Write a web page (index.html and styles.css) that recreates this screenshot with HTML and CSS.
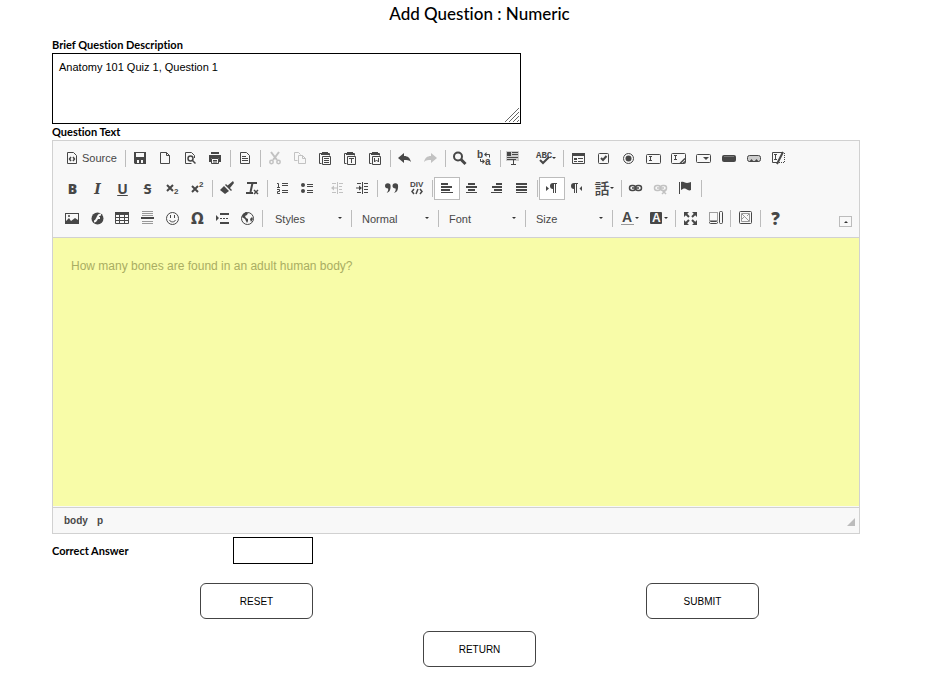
FILE: index.html
```
<!DOCTYPE html>
<html lang="en">
<head>
<meta charset="UTF-8" />
<meta name="viewport" content="width=device-width, initial-scale=1" />
<title>Add Question : Numeric</title>
<link rel="stylesheet" href="styles.css">
</head>
<body>

<form class="question-form">
  <h1>Add Question : Numeric</h1>

  <label class="field-label" for="description">Brief Question Description</label>
  <div class="description-box">
    <textarea id="description" class="description">Anatomy 101 Quiz 1, Question 1</textarea>
    <svg class="grip" viewBox="0 0 16 16"><path d="M1 15L15 1M5 15L15 5M9 15L15 9M13 15L15 13"/></svg>
  </div>

  <label class="field-label" for="questionText">Question Text</label>
  <div class="editor">
    <div class="toolbar">

      <div class="row">
        <button type="button" class="tool source"><svg viewBox="0 0 16 16"><path class="line" d="M3.5 2.5h6l3 3v8h-9z"/><path class="thick" d="M7 7L5.500 9L7 11M9 7l1.500 2L9 11"/></svg>Source</button>
        <span class="sep"></span>
        <button type="button" class="tool" aria-label="Save"><svg viewBox="0 0 16 16"><path fill-rule="evenodd" d="M2 2h12v12H3L2 13zM4 3v4h8V3zM5 10v3h2v-3zM9 10v3h2v-3z"/></svg></button>
        <button type="button" class="tool" aria-label="New Page"><svg viewBox="0 0 16 16"><path class="line" d="M3.500 2.500h6l3 3v8h-9zM9.500 2.500v3h3"/></svg></button>
        <button type="button" class="tool" aria-label="Preview"><svg viewBox="0 0 16 16"><path class="line" d="M12.500 8V5.500l-3-3h-6v11h6"/><circle class="thick" cx="8.500" cy="8.500" r="2.500"/><path class="thick" d="M10.500 10.500l3 3"/></svg></button>
        <button type="button" class="tool" aria-label="Print"><svg viewBox="0 0 16 16"><path d="M4 2h8v2H4zM2 5h12v7h-2V8H4v4H2z"/><path class="line" d="M4.500 8.500h7v5h-7zM6 10.500h4M6 12h4"/></svg></button>
        <span class="sep"></span>
        <button type="button" class="tool" aria-label="Templates"><svg viewBox="0 0 16 16"><path class="line" d="M3.500 2.500h6l3 3v8h-9zM5 6.500h4M5 8.500h6M5 10.500h6"/></svg></button>
        <span class="sep"></span>
        <button type="button" class="tool" aria-label="Cut" disabled><svg viewBox="0 0 16 16"><path class="bold-line" d="M4 2l6 8M12 2L6 10"/><circle class="thick" cx="4.500" cy="12" r="1.700"/><circle class="thick" cx="11.500" cy="12" r="1.700"/></svg></button>
        <button type="button" class="tool" aria-label="Copy" disabled><svg viewBox="0 0 16 16"><path class="line" d="M5.500 10.500h-3v-8h4l2 2M6.500 5.500h4l3 3v5h-7zM10.500 5.500v3h3"/></svg></button>
        <button type="button" class="tool" aria-label="Paste"><svg viewBox="0 0 16 16"><path class="line" d="M4.500 13.500h-2v-10h2M11 3.500h1.500v2"/><path d="M4 3h1V2h6v1h1v2H4z"/><path class="line" d="M5.500 6.500h8v8h-8zM7 8.500h5M7 10.500h5M7 12.500h5"/></svg></button>
        <button type="button" class="tool" aria-label="Paste as plain text"><svg viewBox="0 0 16 16"><path class="line" d="M4.500 13.500h-2v-10h2M11 3.500h1.500v2"/><path d="M4 3h1V2h6v1h1v2H4z"/><path class="line" d="M5.500 6.500h8v8h-8zM7 8.500h5M9.500 9v4"/></svg></button>
        <button type="button" class="tool" aria-label="Paste from Word"><svg viewBox="0 0 16 16"><path class="line" d="M4.500 13.500h-2v-10h2M11 3.500h1.500v2"/><path d="M4 3h1V2h6v1h1v2H4z"/><path class="line" d="M5.500 6.500h8v8h-8zM7.500 8v4l2-2 2 2V8"/></svg></button>
        <span class="sep"></span>
        <button type="button" class="tool" aria-label="Undo"><svg viewBox="0 0 16 16"><path d="M1 8l6-5v3c4 0 6 2 7 6-2-2-4-2-7-2v3z"/></svg></button>
        <button type="button" class="tool" aria-label="Redo" disabled><svg viewBox="0 0 16 16"><path d="M15 8L9 3v3c-4 0-6 2-7 6 2-2 4-2 7-2v3z"/></svg></button>
        <span class="sep"></span>
        <button type="button" class="tool" aria-label="Find"><svg viewBox="0 0 16 16"><circle class="bold-line" cx="6" cy="6.500" r="4"/><path class="heavy" d="M9 9.500l4.500 4.500"/></svg></button>
        <button type="button" class="tool" aria-label="Replace"><svg viewBox="0 0 16 16"><text class="mini" x="0" y="8">b</text><text class="mini" x="8" y="15">a</text><path class="line" d="M9 4.500h3.500v3M3.500 9v2.500H6"/><path d="M7 4.500L9.500 2v5zM8 11.500L5.500 9v5z"/></svg></button>
        <span class="sep"></span>
        <button type="button" class="tool select-all" aria-label="Select All"><svg viewBox="0 0 16 16"><path class="haze" d="M1 1h13v10H1z"/><path d="M2 2h4v4H2z"/><path class="line" d="M7 2.500h6M7 4.500h6M2 7.500h11M2 9.500h9M8.500 10v5M6 14.500h5"/></svg></button>
        <button type="button" class="tool spell" aria-label="Spell Check"><svg viewBox="0 0 16 16"><text class="abc" x="0" y="8">ABC</text><path class="bold-line" d="M4 10l3 3L13 7"/></svg><svg class="caret" viewBox="0 0 4 2"><path d="M0 0h4L2 2z"/></svg></button>
        <span class="sep"></span>
        <button type="button" class="tool" aria-label="Form"><svg viewBox="0 0 16 16"><path class="line" d="M2.500 4.500h12v9h-12zM8 8.500h5M8 11.500h5"/><path d="M2 3h13v3H2zM4 8h3v2H4zM4 11h3v1H4z"/></svg></button>
        <button type="button" class="tool" aria-label="Checkbox"><svg viewBox="0 0 16 16"><rect class="line" x="3.500" y="3.500" width="10" height="10" rx="1"/><path class="bold-line" d="M6 8l2 2 3.500-4"/></svg></button>
        <button type="button" class="tool" aria-label="Radio Button"><svg viewBox="0 0 16 16"><circle class="line" cx="8.500" cy="8.500" r="5"/><circle cx="8.500" cy="8.500" r="3"/></svg></button>
        <button type="button" class="tool" aria-label="Text Field"><svg viewBox="0 0 16 16"><rect class="line" x="1.500" y="4.500" width="14" height="9" rx="1"/><path class="line" d="M4 6.500h3M5.500 6.500v4M4 10.500h3"/></svg></button>
        <button type="button" class="tool" aria-label="Textarea"><svg viewBox="0 0 16 16"><rect class="line" x="1.500" y="3.500" width="14" height="10" rx="1"/><path class="line" d="M4 5.500h3M5.500 5.500v4M4 9.500h3"/><path class="thick" d="M10 13.500l5-5M13 13.500l2-2"/></svg></button>
        <button type="button" class="tool" aria-label="Selection Field"><svg viewBox="0 0 16 16"><rect class="line" x="1.500" y="4.500" width="14" height="8" rx="1"/><path d="M8 7h6l-3 3z"/></svg></button>
        <button type="button" class="tool" aria-label="Button"><svg viewBox="0 0 16 16"><rect x="2" y="5" width="14" height="7" rx="2"/><path class="faint" d="M4 6.500h10"/></svg></button>
        <button type="button" class="tool" aria-label="Image Button"><svg viewBox="0 0 16 16"><rect class="shade" x="2.500" y="5.500" width="13" height="6" rx="2"/><path d="M4 12l2.500-3L9 12l2.500-3 2.500 3z"/></svg></button>
        <button type="button" class="tool" aria-label="Hidden Field"><svg viewBox="0 0 16 16"><path class="line" d="M7 12.500H2.500v-10H12M4 4.500h3M5.500 4.500v5M4 9.500h3"/><path class="line dots" d="M9 12.500h5.500v-10"/><path class="bold-line" d="M13 2L7 14"/></svg></button>
      </div>

      <div class="row">
        <button type="button" class="tool letter" aria-label="Bold"><b>B</b></button>
        <button type="button" class="tool letter" aria-label="Italic"><i class="serif">I</i></button>
        <button type="button" class="tool letter" aria-label="Underline"><u>U</u></button>
        <button type="button" class="tool letter" aria-label="Strikethrough"><s>S</s></button>
        <button type="button" class="tool" aria-label="Subscript"><svg viewBox="0 0 16 16"><path class="bold-line" d="M3 5l6 6M9 5l-6 6"/><text class="index" x="10" y="14">2</text></svg></button>
        <button type="button" class="tool" aria-label="Superscript"><svg viewBox="0 0 16 16"><path class="bold-line" d="M3 6l6 6M9 6l-6 6"/><text class="index" x="10" y="7">2</text></svg></button>
        <span class="sep"></span>
        <button type="button" class="tool" aria-label="Copy Formatting"><svg viewBox="0 0 16 16"><path d="M14 1l1 2-4 5-3-2zM7 4l6 6-1 1-6-6zM5 6l5 5-4 3-5-4z"/></svg></button>
        <button type="button" class="tool" aria-label="Remove Format"><svg viewBox="0 0 16 16"><path class="bold-line" d="M3 3h10M8.500 3l-2 9M2 13h7"/><path class="thick" d="M10 10l4 4M14 10l-4 4"/></svg></button>
        <span class="sep"></span>
        <button type="button" class="tool" aria-label="Numbered List"><svg viewBox="0 0 16 16"><path class="line" d="M3 3.500h1.500v4M3 7.500h3M3 9.500h2.500v2h-2v2H6M8 3.500h6M8 5.500h6M8 10.500h6M8 12.500h6"/></svg></button>
        <button type="button" class="tool" aria-label="Bulleted List"><svg viewBox="0 0 16 16"><circle cx="4" cy="5" r="2"/><circle cx="4" cy="11" r="2"/><path class="line" d="M8 4.500h6M8 6.500h6M8 10.500h6M8 12.500h6"/></svg></button>
        <span class="gap"></span>
        <button type="button" class="tool" aria-label="Decrease Indent" disabled><svg viewBox="0 0 16 16"><path class="line" d="M8.500 2v12M3 3.500h4M3 12.500h4M10 3.500h4M10 6.500h3M10 9.500h3M10 12.500h4M4 8h4"/><path d="M2 8l3-2.500v5z"/></svg></button>
        <button type="button" class="tool" aria-label="Increase Indent"><svg viewBox="0 0 16 16"><path class="line" d="M8.500 2v12M3 3.500h4M3 12.500h4M10 3.500h4M10 6.500h4M10 9.500h4M10 12.500h4M2 8h4"/><path d="M8 8L5 5.500v5z"/></svg></button>
        <span class="sep"></span>
        <button type="button" class="tool" aria-label="Block Quote"><svg viewBox="0 0 16 16"><path d="M1 6a2.800 2.800 0 1 1 5.600 0c0 4-1 6-4 7 1-1 2-3 1.500-4.500C2 8.500 1 7.500 1 6zM8.500 6a2.800 2.800 0 1 1 5.600 0c0 4-1 6-4 7 1-1 2-3 1.500-4.500C9.500 8.500 8.500 7.500 8.500 6z"/></svg></button>
        <button type="button" class="tool" aria-label="Create Div Container"><svg viewBox="0 0 16 16"><text class="div-text" x="1" y="7">DIV</text><path class="thick" d="M5 9l-2 2.500L5 14M11 9l2 2.500-2 2.500M9 9l-2 5"/></svg></button>
        <span class="sep"></span>
        <button type="button" class="tool on" aria-label="Align Left"><svg viewBox="0 0 16 16"><path d="M2 3h7v2H2zM2 6h11v2H2zM2 9h9v2H2zM2 12h12v1H2z"/></svg></button>
        <button type="button" class="tool" aria-label="Center"><svg viewBox="0 0 16 16"><path d="M4 3h7v2H4zM2 6h11v2H2zM4 9h7v2H4zM2 12h11v1H2z"/></svg></button>
        <button type="button" class="tool" aria-label="Align Right"><svg viewBox="0 0 16 16"><path d="M7 3h6v2H7zM3 6h10v2H3zM5 9h8v2H5zM2 12h11v1H2z"/></svg></button>
        <button type="button" class="tool" aria-label="Justify"><svg viewBox="0 0 16 16"><path d="M2 3h11v2H2zM2 6h11v2H2zM2 9h11v2H2zM2 12h11v1H2z"/></svg></button>
        <span class="sep"></span>
        <button type="button" class="tool on" aria-label="Text direction from left to right"><svg viewBox="0 0 16 16"><path d="M2 6l3 2.500L2 11zM9 3h4v1h-1v9h-1V4h-1v9H9V9a3 3 0 0 1 0-6z"/></svg></button>
        <button type="button" class="tool" aria-label="Text direction from right to left"><svg viewBox="0 0 16 16"><path d="M13 6l-2.500 2.500L13 11zM5 3h4v1H8v9H7V4H6v9H5V9a3 3 0 0 1 0-6z"/></svg></button>
        <button type="button" class="tool drop" aria-label="Set language"><span class="kanji">話</span><svg class="caret" viewBox="0 0 4 2"><path d="M0 0h4L2 2z"/></svg></button>
        <span class="sep"></span>
        <button type="button" class="tool" aria-label="Link"><svg viewBox="0 0 16 16"><rect class="thick" x="1.500" y="5.500" width="6" height="5" rx="2.500"/><rect class="thick" x="7.500" y="5.500" width="6" height="5" rx="2.500"/><path class="thick" d="M4 8h7"/></svg></button>
        <button type="button" class="tool" aria-label="Unlink" disabled><svg viewBox="0 0 16 16"><rect class="thick" x="1.500" y="5.500" width="6" height="5" rx="2.500"/><rect class="thick" x="7.500" y="5.500" width="6" height="5" rx="2.500"/><path class="thick" d="M4 8h7M9 10l4 4M13 10l-4 4"/></svg></button>
        <button type="button" class="tool" aria-label="Anchor"><svg viewBox="0 0 16 16"><path d="M1 2h1v12H1zM3 2c3-1 4 1 6 1s3-1 4-1v8c-2 1-3 0-5-1s-3 0-5 1z"/></svg></button>
        <span class="sep"></span>
      </div>

      <div class="row">
        <button type="button" class="tool" aria-label="Image"><svg viewBox="0 0 16 16"><path fill-rule="evenodd" d="M1 3h14v11H1zM2 4v7l3-3 2 3 4-3 3 2V4z"/><circle cx="5" cy="6" r="1"/></svg></button>
        <button type="button" class="tool" aria-label="Flash"><svg viewBox="0 0 16 16"><circle cx="8.500" cy="8.500" r="6"/><path class="white-line" d="M12 4.500c-3 0-3 2-4 4s-1 3-3 3M8 8h3"/></svg></button>
        <button type="button" class="tool" aria-label="Table"><svg viewBox="0 0 16 16"><path d="M1 2h14v3H1z"/><path class="line" d="M1.500 2.500h13v11h-13zM1 7.500h14M1 10.500h14M5.500 3v11M10.500 3v11"/></svg></button>
        <button type="button" class="tool" aria-label="Horizontal Line"><svg viewBox="0 0 16 16"><path d="M2 7h13v2H2z"/><path class="line soft" d="M3 1.500h11M3 3.500h11M3 5.500h11M3 11.500h11M3 13.500h11"/></svg></button>
        <button type="button" class="tool" aria-label="Smiley"><svg viewBox="0 0 16 16"><circle class="line" cx="8.500" cy="8.500" r="6"/><path d="M6 5h1v3H6zM10 5h1v3h-1z"/><path class="line" d="M5.500 10c1 2.500 5 2.500 6 0"/></svg></button>
        <button type="button" class="tool letter" aria-label="Special Character"><span class="omega">Ω</span></button>
        <button type="button" class="tool" aria-label="Page Break"><svg viewBox="0 0 16 16"><path d="M2 5l3 3-3 3zM6 3h9v2H6zM6 12h9v2H6z"/><path class="line" d="M6 8.500h9" stroke-dasharray="2 1"/></svg></button>
        <button type="button" class="tool" aria-label="IFrame"><svg viewBox="0 0 16 16"><circle class="line" cx="8.500" cy="8.500" r="6"/><path d="M4 4l3-2 2 1-1 2-2 1 1 2 2 1v2l-1 2-2-4-3-2zM11 9l2-2 1 2-2 3z"/></svg></button>
        <span class="sep"></span>
        <span class="combo first"><select aria-label="Styles"><option>Styles</option></select><svg class="caret" viewBox="0 0 4 2"><path d="M0 0h4L2 2z"/></svg></span>
        <span class="sep"></span>
        <span class="combo"><select aria-label="Paragraph Format"><option>Normal</option></select><svg class="caret" viewBox="0 0 4 2"><path d="M0 0h4L2 2z"/></svg></span>
        <span class="sep"></span>
        <span class="combo"><select aria-label="Font Name"><option>Font</option></select><svg class="caret" viewBox="0 0 4 2"><path d="M0 0h4L2 2z"/></svg></span>
        <span class="sep"></span>
        <span class="combo"><select aria-label="Font Size"><option>Size</option></select><svg class="caret" viewBox="0 0 4 2"><path d="M0 0h4L2 2z"/></svg></span>
        <span class="sep"></span>
        <button type="button" class="tool drop" aria-label="Text Color"><svg viewBox="0 0 16 16"><text class="color-a" x="3" y="12">A</text><path class="line soft" d="M2 14.500h13"/></svg><svg class="caret" viewBox="0 0 4 2"><path d="M0 0h4L2 2z"/></svg></button>
        <button type="button" class="tool drop" aria-label="Background Color"><svg viewBox="0 0 16 16"><rect x="2" y="2" width="12" height="12" rx="1"/><text class="color-a inverse" x="4" y="12">A</text></svg><svg class="caret" viewBox="0 0 4 2"><path d="M0 0h4L2 2z"/></svg></button>
        <span class="sep"></span>
        <button type="button" class="tool" aria-label="Maximize"><svg viewBox="0 0 16 16"><path d="M2 2h5L2 7zM15 2v5l-5-5zM2 15v-5l5 5zM15 15h-5l5-5z"/><path class="bold-line" d="M3 3l4 4M14 3l-4 4M3 14l4-4M14 14l-4-4"/></svg></button>
        <button type="button" class="tool" aria-label="Show Blocks"><svg viewBox="0 0 16 16"><path class="line dots" d="M2.500 2.500h8v8h-8z"/><rect class="line" x="2.500" y="11.500" width="8" height="2" rx="1"/><rect class="line" x="12.500" y="1.500" width="3" height="12" rx="1"/></svg></button>
        <span class="sep"></span>
        <button type="button" class="tool" aria-label="Image Browser"><svg viewBox="0 0 16 16"><rect class="line" x="2.500" y="1.500" width="12" height="12" rx="1"/><path class="line soft" d="M4.500 3.500h8v8h-8zM5 4l7 7M5 9l3-3M10 6l2-2"/></svg></button>
        <span class="sep"></span>
        <button type="button" class="tool letter" aria-label="About"><b class="about">?</b></button>
        <button type="button" class="collapse" aria-label="Collapse Toolbar"><svg class="caret" viewBox="0 0 4 2"><path d="M0 2h4L2 0z"/></svg></button>
      </div>
    </div>

    <textarea id="questionText" class="content" placeholder="How many bones are found in an adult human body?"></textarea>

    <div class="statusbar">
      <span>body</span>
      <span>p</span>
      <svg class="corner" viewBox="0 0 8 8"><path d="M8 0v8H0z"/></svg>
    </div>
  </div>

  <div class="answer">
    <label class="field-label" for="answer">Correct Answer</label>
    <input type="text" id="answer">
  </div>

  <div class="actions">
    <button type="reset" class="action">RESET</button>
    <button type="submit" class="action">SUBMIT</button>
  </div>
  <div class="actions return">
    <button type="button" class="action">RETURN</button>
  </div>
</form>

</body>
</html>
```
FILE: styles.css
```
* {
  box-sizing: border-box;
}

body {
  margin: 0;
  background: #fff;
  color: #000;
  font-family: "Liberation Sans", Arial, sans-serif;
  font-size: 11px;
}

button, select, textarea, input {
  font-family: inherit;
  font-size: 11px;
}

.question-form {
  padding: 0 29px 0 52px;
}

h1 {
  margin: 0 0 9px;
  font-family: Lato, sans-serif;
  font-size: 17px;
  font-weight: 500;
  font-variant-ligatures: none;
  line-height: 28px;
  text-align: center;
}

.field-label {
  display: block;
  font-family: Lato, sans-serif;
  font-size: 11px;
  font-weight: 700;
  font-variant-ligatures: none;
  line-height: 16px;
}

.description-box {
  position: relative;
  width: 469px;
  max-width: 100%;
}

.description {
  display: block;
  width: 100%;
  height: 71px;
  padding: 7px 6px;
  border: 1px solid #000;
  resize: none;
}

.grip {
  position: absolute;
  right: 1px;
  bottom: 1px;
  width: 16px;
  height: 16px;
  fill: none;
  stroke: #666;
}

/* editor */
.editor {
  margin-right: 47px;
  border: 1px solid #d1d1d1;
}

.toolbar {
  display: flex;
  flex-direction: column;
  gap: 7px;
  padding: 6px 7px 7px;
  background: #f8f8f8;
  border-bottom: 1px solid #d1d1d1;
}

.row {
  display: flex;
  flex-wrap: wrap;
  align-items: center;
}

.tool {
  display: flex;
  align-items: center;
  width: 25px;
  height: 23px;
  padding: 3px 5px 4px 4px;
  border: 0;
  background: none;
  color: #474747;
}

.tool:disabled {
  opacity: 0.3;
}

.tool svg {
  flex: none;
  width: 16px;
  height: 16px;
  overflow: visible;
  fill: #474747;
}

.tool .caret,
.caret {
  flex: none;
  width: 4px;
  height: 2px;
  fill: #333;
}

.tool.source {
  width: 63px;
  gap: 2px;
}

.tool.select-all {
  padding-left: 2px;
}

.tool.spell {
  width: 33px;
  padding-left: 8px;
}

.tool.drop {
  width: 29px;
  padding-right: 0;
}

.tool.on {
  width: 26px;
  margin-left: -1px;
  padding: 2px 4px 3px;
  background: #fff;
  border: 1px solid #bcbcbc;
}

.tool.letter {
  justify-content: center;
  padding: 0;
  font-family: "Open Sans", sans-serif;
  font-size: 14px;
  font-weight: 700;
  line-height: 16px;
}

.serif {
  font-family: "DejaVu Serif", serif;
}

.omega {
  font-family: "DejaVu Sans", sans-serif;
  font-size: 15px;
}

.tool .about {
  font-size: 17px;
}

.kanji {
  width: 16px;
  font-family: "Noto Sans CJK JP", sans-serif;
  font-size: 15px;
  font-weight: 500;
  line-height: 16px;
}

.tool .line,
.tool .thick,
.tool .bold-line,
.tool .heavy {
  fill: none;
  stroke: #474747;
  stroke-width: 1;
}

.tool .thick {
  stroke-width: 1.5;
}

.tool .bold-line {
  stroke-width: 2;
}

.tool .heavy {
  stroke-width: 3;
}

.tool .soft {
  stroke: #999;
}

.tool .dots {
  stroke-dasharray: 1 1;
}

.tool .haze {
  fill: #ccc;
}

.tool .faint {
  stroke: #777;
}

.tool .white-line {
  fill: none;
  stroke: #f8f8f8;
  stroke-width: 2;
}

.tool .shade {
  fill: #ccc;
  stroke: #474747;
}

.mini {
  font-size: 10px;
  font-weight: 700;
}

.abc {
  font-family: "Liberation Mono", monospace;
  font-size: 9px;
  font-weight: 700;
}

.div-text {
  font-size: 8px;
  font-weight: 700;
}

.index {
  font-size: 8px;
  font-weight: 700;
}

.color-a {
  font-size: 14px;
  font-weight: 700;
}

.inverse {
  fill: #f8f8f8;
  font-size: 12px;
}

.sep {
  width: 1px;
  height: 17px;
  margin: 0 2px;
  background: #bcbcbc;
}

.gap {
  width: 5px;
}

.combo {
  position: relative;
  width: 82px;
}

.combo.first {
  margin-left: 2px;
}

.combo select {
  display: block;
  width: 100%;
  height: 23px;
  padding: 0 8px;
  border: 0;
  background: none;
  color: #474747;
  appearance: none;
}

.combo .caret {
  position: absolute;
  top: 10px;
  right: 7px;
  pointer-events: none;
}

.collapse {
  display: flex;
  align-items: center;
  justify-content: center;
  align-self: flex-end;
  width: 13px;
  height: 11px;
  margin: 0 0 3px auto;
  padding: 0;
  border: 1px solid #bcbcbc;
  background: none;
}

.content {
  display: block;
  width: 100%;
  height: 269px;
  padding: 20px 18px;
  border: 0;
  border-bottom: 1px solid #f8f8f8;
  background: #f8fca8;
  font-size: 12px;
  line-height: 16px;
  resize: none;
}

.content::placeholder {
  color: #a9ad62;
}

.statusbar {
  display: flex;
  align-items: center;
  gap: 9px;
  height: 26px;
  padding: 0 4px 0 11px;
  background: #f8f8f8;
  border-top: 1px solid #d1d1d1;
  color: #484848;
  font-size: 10px;
  font-weight: 700;
}

.corner {
  width: 8px;
  height: 8px;
  margin: 3px 0 0 auto;
  fill: #bcbcbc;
}

/* answer and buttons */
.answer {
  display: flex;
  align-items: center;
  padding-top: 3px;
}

.answer .field-label {
  width: 181px;
}

.answer input {
  width: 80px;
  height: 27px;
  border: 1px solid #000;
}

.actions {
  display: flex;
  justify-content: space-between;
  padding: 19px 148px 0;
}

.actions.return {
  justify-content: center;
  padding: 12px 0 7px;
}

.action {
  width: 113px;
  height: 36px;
  border: 1px solid #444;
  border-radius: 6px;
  background: #fff;
  color: #000;
  font-size: 10px;
}
```
